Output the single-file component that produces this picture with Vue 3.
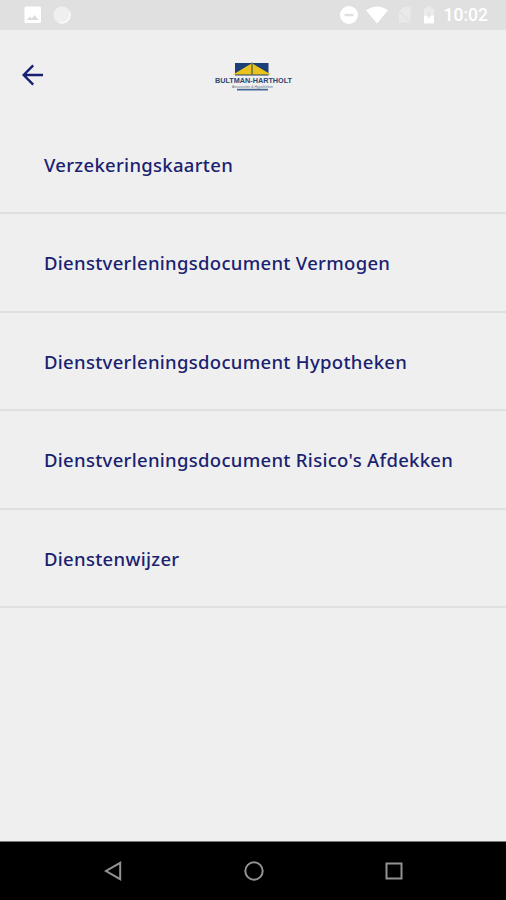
<template>
  <div class="screen">
    <div class="status-bar">
      <div class="status-group">
        <svg class="icon-picture" viewBox="0 0 18 18">
          <rect x="0.5" y="0.5" width="16.5" height="16.5" rx="1.5" fill="#ffffff" />
          <path d="M3 14l2.8-3.5 2 2 2.7-3.5 4 5z" fill="#dcdcdc" />
        </svg>
        <svg class="icon-sync" viewBox="0 0 18 18">
          <circle cx="9" cy="9" r="8.5" fill="#efefef" />
          <path d="M16.5 6.5A8 8 0 0 1 6 16.3" fill="none" stroke="#fafafa" stroke-width="1.6" />
        </svg>
      </div>
      <div class="status-group">
        <svg class="icon-dnd" viewBox="0 0 18 18">
          <circle cx="9" cy="9" r="9" fill="#ffffff" />
          <rect x="4.5" y="7.8" width="9" height="2.4" fill="#e0e0e0" />
        </svg>
        <svg class="icon-wifi" viewBox="0 0 22 18">
          <path d="M0 4.2Q11-3.4 22 4.2L11 17.5z" fill="#ffffff" />
        </svg>
        <svg class="icon-sim" viewBox="0 0 14 18">
          <path d="M5 1h7.5v15.5H1V6z" fill="#e9e9e9" />
          <path d="M2 6l9 9" stroke="#e1e1e1" stroke-width="1.5" />
        </svg>
        <svg class="icon-battery" viewBox="0 0 12 18">
          <path d="M4 0.5h4v2h3v7H1v-7h3z" fill="#ebebeb" />
          <path d="M1 9.5h10v8H1z" fill="#ffffff" />
          <path d="M6.8 4.5L3.5 10.5h2v3l2.8-5h-1.5z" fill="#e3e3e3" />
        </svg>
        <span class="clock">10:02</span>
      </div>
    </div>

    <header class="header">
      <button class="back-btn" aria-label="Terug">
        <svg viewBox="0 0 22 22" fill="none" stroke="#17206f" stroke-width="2.4">
          <path d="M21 11H2M11.2 1.3L1.7 11l9.5 9.7" />
        </svg>
      </button>
      <svg class="logo" viewBox="0 0 82 32">
        <rect x="22" y="1" width="33.5" height="12.5" fill="#1d3f78" />
        <path d="M20 12.5L38.5 1.6v10.9zM39.5 1.6L58 12.5H39.5z" fill="#e9c21c" />
        <path d="M39 0.5v12" stroke="#8c8132" stroke-width="1.4" />
        <text
          class="logo-name"
          x="2"
          y="20.8"
          textLength="77"
          lengthAdjust="spacingAndGlyphs"
        >BULTMAN-HARTHOLT</text>
        <text
          class="logo-sub"
          x="19"
          y="25.8"
          textLength="41"
          lengthAdjust="spacingAndGlyphs"
        >Assurantiën &amp; Hypotheken</text>
        <rect x="24" y="26.8" width="31" height="1.7" fill="#456796" />
      </svg>
    </header>

    <ul class="list">
      <li v-for="item in items" :key="item" class="list-item">{{ item }}</li>
    </ul>

    <nav class="nav-bar">
      <svg viewBox="0 0 20 20" fill="none" stroke="#929292" stroke-width="2">
        <path d="M16.2 1.8v16.4L2 10z" />
      </svg>
      <svg viewBox="0 0 20 20" fill="none" stroke="#929292" stroke-width="2">
        <circle cx="10" cy="10" r="8.7" />
      </svg>
      <svg viewBox="0 0 20 20" fill="none" stroke="#929292" stroke-width="2">
        <rect x="2.5" y="2.5" width="15" height="15" />
      </svg>
    </nav>
  </div>
</template>

<script setup>
const items = [
  'Verzekeringskaarten',
  'Dienstverleningsdocument Vermogen',
  'Dienstverleningsdocument Hypotheken',
  "Dienstverleningsdocument Risico's Afdekken",
  'Dienstenwijzer'
]
</script>

<style>
body {
  margin: 0;
  background: #efefef;
}
</style>

<style scoped>
.screen {
  display: flex;
  flex-direction: column;
  width: 100%;
  height: 900px;
  background: #efefef;
  font-family: 'Noto Sans', sans-serif;
}

.status-bar {
  display: flex;
  justify-content: space-between;
  height: 30px;
  padding: 0 18px 0 24px;
  background: #e0e0e0;
}

.status-group {
  display: flex;
  align-items: center;
}

.status-group svg {
  display: block;
  height: 18px;
}

.icon-picture {
  width: 18px;
}

.icon-sync {
  width: 18px;
  margin-left: 11px;
}

.icon-dnd {
  width: 18px;
}

.icon-wifi {
  width: 22px;
  margin-left: 8px;
}

.icon-sim {
  width: 14px;
  margin-left: 10px;
}

.icon-battery {
  width: 12px;
  margin-left: 11px;
}

.clock {
  margin-left: 9px;
  font-family: Roboto, sans-serif;
  font-size: 17.5px;
  font-weight: 500;
  line-height: 32px;
  color: #ffffff;
}

.header {
  display: flex;
  height: 85.5px;
}

.back-btn {
  width: 22px;
  height: 22px;
  margin: 34px 0 0 22px;
  padding: 0;
  border: 0;
  background: none;
}

.back-btn svg {
  display: block;
  width: 22px;
  height: 22px;
}

.logo {
  width: 82px;
  height: 32px;
  margin: 32px 0 0 169px;
  overflow: visible;
}

.logo-name {
  font-family: 'Liberation Sans', sans-serif;
  font-size: 8px;
  font-weight: 700;
  fill: #2c4673;
}

.logo-sub {
  font-family: 'Liberation Sans', sans-serif;
  font-size: 4px;
  fill: #60718d;
}

.list {
  flex: 1;
  margin: 0;
  padding: 0;
  list-style: none;
}

.list-item {
  box-sizing: border-box;
  height: 98.5px;
  padding-left: 44px;
  border-bottom: 2px solid #e0e0e0;
  font-size: 18.5px;
  font-weight: 500;
  line-height: 97px;
  letter-spacing: 0.3px;
  white-space: nowrap;
  color: #1a2270;
}

.nav-bar {
  display: flex;
  align-items: center;
  justify-content: space-between;
  box-sizing: border-box;
  height: 59px;
  padding: 0 102px 0 104px;
  border-top: 1px solid #777777;
  background: #000000;
}

.nav-bar svg {
  width: 20px;
  height: 20px;
}
</style>
